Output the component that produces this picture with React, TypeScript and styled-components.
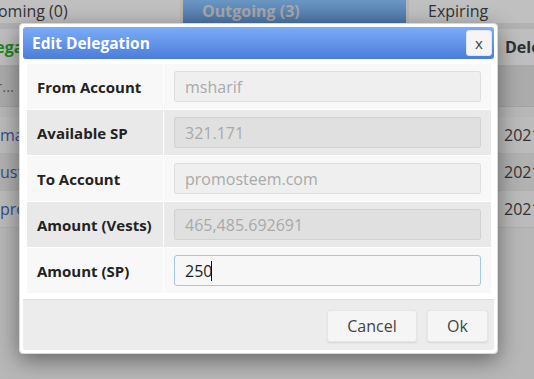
import React from 'react'
import styled, { createGlobalStyle } from 'styled-components'

const GlobalStyle = createGlobalStyle`
  html, body {
    margin: 0;
    padding: 0;
    font-family: "Open Sans", "Noto Sans", sans-serif;
  }
  body {
    width: 534px;
    height: 379px;
    overflow: hidden;
  }
`

const Page = styled.div`
  position: relative;
  width: 534px;
  height: 379px;
  overflow: hidden;
  background: #ececec;
`

const TabBar = styled.div`
  display: flex;
  gap: 3px;
  margin-left: -43px;
  height: 23px;
  border-bottom: 6px solid #e6e6e6;
`

const Tab = styled.div<{ $active?: boolean }>`
  flex: 0 0 223px;
  box-sizing: border-box;
  padding-left: 19px;
  font-size: 16px;
  line-height: 22px;
  font-weight: ${(p) => (p.$active ? 700 : 400)};
  color: ${(p) => (p.$active ? '#d6d6d6' : '#2f2f2f')};
  background: ${(p) =>
    p.$active ? 'linear-gradient(#7ebefe, #578fd6)' : '#fafafa'};
`

const Grid = styled.div`
  display: grid;
  grid-template-columns: 537px 1fr;
  margin-left: -40px;
`

const HeadCell = styled.div<{ $green?: boolean }>`
  height: 36px;
  line-height: 36px;
  padding-left: ${(p) => (p.$green ? 9 : 8)}px;
  font-size: 16px;
  font-weight: 700;
  white-space: nowrap;
  color: ${(p) => (p.$green ? '#12a612' : '#2a2a2a')};
  background: #f6f6f6;
  border-bottom: 2px solid #dadada;
`

const FilterCell = styled.div`
  height: 39px;
  line-height: 39px;
  padding-left: 7px;
  font-size: 15px;
  color: #6a6a6a;
  white-space: nowrap;
  background: #dcdcdc;
  border-bottom: 1px solid #d0d0d0;
`

const DataCell = styled.div<{ $alt?: boolean; $link?: boolean }>`
  height: 36px;
  line-height: 36px;
  padding-left: ${(p) => (p.$link ? 40 : 7)}px;
  font-size: 16px;
  white-space: nowrap;
  color: ${(p) => (p.$link ? '#2e58b6' : '#2f2f2f')};
  background: ${(p) => (p.$alt ? '#e4e4e4' : '#f2f2f2')};
  border-bottom: 1px solid #e0e0e0;
`

const Spacer = styled.div`
  height: 10px;
  grid-column: 1 / -1;
`

const Overlay = styled.div`
  position: absolute;
  inset: 0;
  background: rgba(60, 60, 60, 0.3);
`

const Dialog = styled.div`
  position: absolute;
  left: 19px;
  top: 23px;
  width: 479px;
  box-sizing: border-box;
  padding: 3px;
  background: #ffffff;
  border: 1px solid #d8d8d8;
  border-radius: 4px;
  box-shadow: 0 6px 22px rgba(0, 0, 0, 0.45);
`

const TitleBar = styled.div`
  display: flex;
  align-items: center;
  justify-content: space-between;
  height: 32px;
  padding: 0 2px 0 9px;
  border-radius: 3px;
  background: linear-gradient(#7cadf8, #4a7ddb);
`

const Title = styled.span`
  color: #ffffff;
  font-size: 15.5px;
  font-weight: 700;
`

const CloseButton = styled.button`
  width: 26px;
  height: 26px;
  padding: 0;
  border: 1px solid #e4e4e4;
  border-radius: 3px;
  background: #f5f5f5;
  color: #444444;
  font-family: inherit;
  font-size: 15px;
  line-height: 22px;
`

const Content = styled.div`
  padding: 5px 3px 6px 4px;
`

const Form = styled.div`
  display: grid;
  grid-template-columns: 136px 1fr;
  gap: 1px;
`

const Label = styled.div<{ $alt?: boolean }>`
  display: flex;
  align-items: center;
  height: 45px;
  padding-left: 10px;
  font-size: 15px;
  font-weight: 700;
  color: #222222;
  background: ${(p) => (p.$alt ? '#e9e9e9' : '#f8f8f8')};
`

const Value = styled.div<{ $alt?: boolean }>`
  position: relative;
  display: flex;
  align-items: center;
  height: 45px;
  padding: 0 10px;
  background: ${(p) => (p.$alt ? '#e9e9e9' : '#f8f8f8')};
`

const Field = styled.input<{ $active?: boolean }>`
  box-sizing: border-box;
  width: 100%;
  height: 31px;
  padding: 0 10px;
  border-radius: 3px;
  border: 1px solid ${(p) => (p.$active ? '#a6c6ea' : 'rgba(0, 0, 0, 0.07)')};
  background: ${(p) => (p.$active ? '#f7f7f7' : 'rgba(0, 0, 0, 0.035)')};
  color: ${(p) => (p.$active ? '#1e1e1e' : '#a9a9a9')};
  font-family: inherit;
  font-size: 16px;
  outline: none;
  caret-color: transparent;
`

const Caret = styled.span`
  position: absolute;
  left: 47px;
  top: 13px;
  width: 1px;
  height: 20px;
  background: #111111;
`

const Footer = styled.div`
  display: flex;
  justify-content: flex-end;
  gap: 10px;
  height: 51px;
  box-sizing: border-box;
  padding: 10px 6px 0 0;
  background: #ececec;
  border-top: 1px solid #dddddd;
  border-radius: 0 0 3px 3px;
`

const Button = styled.button<{ $w: number }>`
  width: ${(p) => p.$w}px;
  height: 32px;
  border: 1px solid #e6e6e6;
  border-radius: 3px;
  background: #f5f5f5;
  color: #444444;
  font-family: inherit;
  font-size: 16px;
  box-shadow: 0 1px 2px rgba(0, 0, 0, 0.1);
`

const rows = [
  { label: 'From Account', value: 'msharif' },
  { label: 'Available SP', value: '321.171' },
  { label: 'To Account', value: 'promosteem.com' },
  { label: 'Amount (Vests)', value: '465,485.692691' },
]

const delegations = [
  { to: 'mahdiyari', date: '2021-03-02' },
  { to: 'ustyle', date: '2021-02-14' },
  { to: 'promosteem.com', date: '2021-01-20' },
]

export default function App() {
  return (
    <Page>
      <GlobalStyle />
      <TabBar>
        <Tab>Incoming (0)</Tab>
        <Tab $active>Outgoing (3)</Tab>
        <Tab>Expiring</Tab>
      </TabBar>
      <Grid>
        <HeadCell $green>Delegatee</HeadCell>
        <HeadCell>Delegated On</HeadCell>
        <FilterCell>Filter...</FilterCell>
        <FilterCell />
        <Spacer />
        {delegations.map((d, i) => (
          <React.Fragment key={d.to}>
            <DataCell $alt={i % 2 === 1} $link>
              {d.to}
            </DataCell>
            <DataCell $alt={i % 2 === 1}>{d.date}</DataCell>
          </React.Fragment>
        ))}
      </Grid>
      <Overlay />
      <Dialog>
        <TitleBar>
          <Title>Edit Delegation</Title>
          <CloseButton>x</CloseButton>
        </TitleBar>
        <Content>
          <Form>
            {rows.map((r, i) => (
              <React.Fragment key={r.label}>
                <Label $alt={i % 2 === 1}>{r.label}</Label>
                <Value $alt={i % 2 === 1}>
                  <Field value={r.value} disabled readOnly />
                </Value>
              </React.Fragment>
            ))}
            <Label>Amount (SP)</Label>
            <Value>
              <Field $active defaultValue="250" />
              <Caret />
            </Value>
          </Form>
        </Content>
        <Footer>
          <Button $w={90}>Cancel</Button>
          <Button $w={61}>Ok</Button>
        </Footer>
      </Dialog>
    </Page>
  )
}
